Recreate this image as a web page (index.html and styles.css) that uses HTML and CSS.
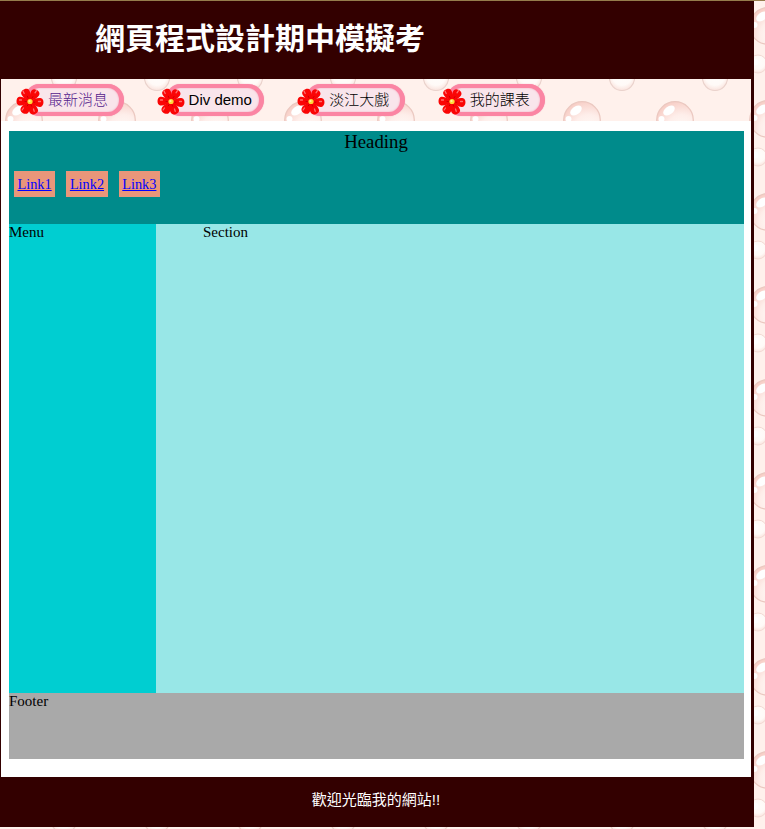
FILE: index.html
```html
<!DOCTYPE html>
<html lang="zh-Hant">
<head>
<meta charset="utf-8">
<title>網頁程式設計期中模擬考</title>
<link rel="stylesheet" href="styles.css">
</head>
<body>
<svg class="defs" width="0" height="0" aria-hidden="true">
  <defs>
    <path id="petal" d="M0 0C-2.5 -3-5 -7.5-4.3 -10.8C-3.6 -14.4 3.6 -14.4 4.3 -10.8C5 -7.5 2.5 -3 0 0Z"/>
    <symbol id="flower" viewBox="0 0 28 30">
      <g fill="#fa0505">
        <use href="#petal" transform="translate(14 15.5) rotate(-27)"/>
        <use href="#petal" transform="translate(14 15.5) rotate(32)"/>
        <use href="#petal" transform="translate(14 15.5) rotate(96)"/>
        <use href="#petal" transform="translate(14 15.5) rotate(158)"/>
        <use href="#petal" transform="translate(14 15.5) rotate(212)"/>
        <use href="#petal" transform="translate(14 15.5) rotate(272)"/>
      </g>
      <path d="M7 5l1.2 2.5M20.5 4.6l-1.5 2.2M3.5 14h2M22.5 15.5h2M17.5 23l.7 2.3M7.5 22l-1.4 2" fill="none" stroke="#ff7070" stroke-width="1.3" stroke-linecap="round"/>
      <path d="M12.3 12.3l-1.2-2.5M15.8 12.3l1.3-2M10.8 15.5h-2.2M17 16l2.2.3M15 18.5l.7 2M12.3 18.3l-1.2 1.8" stroke="#c40000" stroke-width=".9"/>
      <circle cx="14" cy="15.5" r="2.6" fill="#ffd83a"/>
      <circle cx="13.5" cy="15" r="1.1" fill="#fff6a0"/>
    </symbol>
  </defs>
</svg>
<div class="page">
  <header class="banner"><h1>網頁程式設計期中模擬考</h1></header>
  <nav class="nav">
    <a class="tab visited" href="#"><svg class="flower"><use href="#flower"/></svg><span>最新消息</span></a>
    <a class="tab" href="#"><svg class="flower"><use href="#flower"/></svg><span>Div demo</span></a>
    <a class="tab" href="#"><svg class="flower"><use href="#flower"/></svg><span>淡江大戲</span></a>
    <a class="tab" href="#"><svg class="flower"><use href="#flower"/></svg><span>我的課表</span></a>
  </nav>
  <main class="content">
    <div class="heading">
      <div class="heading-title">Heading</div>
      <div class="links"><a href="#">Link1</a><a href="#">Link2</a><a href="#">Link3</a></div>
    </div>
    <div class="columns">
      <div class="menu">Menu</div>
      <div class="section">Section</div>
    </div>
    <div class="demo-footer">Footer</div>
  </main>
  <footer class="footer">歡迎光臨我的網站!!</footer>
</div>
</body>
</html>
```
FILE: styles.css
```css
:root {
  --bubbles: url("data:image/svg+xml,%3Csvg xmlns='http://www.w3.org/2000/svg' width='93' height='93' viewBox='0 0 93 93'%3E%3Cdefs%3E%3CradialGradient id='b' cx='.68' cy='.75' r='.8'%3E%3Cstop offset='0' stop-color='%23fffaf7'/%3E%3Cstop offset='.5' stop-color='%23feeeea'/%3E%3Cstop offset='1' stop-color='%23f7cdc5'/%3E%3C/radialGradient%3E%3CradialGradient id='s' cx='.5' cy='.4' r='.6'%3E%3Cstop offset='0' stop-color='%23fffdfb'/%3E%3Cstop offset='.65' stop-color='%23fffaf7'/%3E%3Cstop offset='1' stop-color='%23fae3dd'/%3E%3C/radialGradient%3E%3C/defs%3E%3Crect width='93' height='93' fill='%23fff1ec'/%3E%3Ccircle cx='40' cy='40' r='18.3' fill='url(%23b)' stroke='%23ebc8c0' stroke-width='1.2'/%3E%3Cellipse cx='34' cy='30.5' rx='6.5' ry='4' transform='rotate(-35 34 30.5)' fill='%23fff'/%3E%3Ccircle cx='26.5' cy='39' r='3' fill='%23fff'/%3E%3Ccircle cx='80' cy='91' r='12.5' fill='url(%23s)' stroke='%23ead2cc' stroke-width='1.1'/%3E%3Ccircle cx='80' cy='-2' r='12.5' fill='url(%23s)' stroke='%23ead2cc' stroke-width='1.1'/%3E%3Ccircle cx='30' cy='78' r='9' fill='url(%23s)' stroke='%23f3dad4' stroke-width='1'/%3E%3Ccircle cx='27' cy='76' r='3.5' fill='%23fff'/%3E%3C/svg%3E");
}

* { box-sizing: border-box; }

body {
  margin: 0;
  min-height: 829px;
  border-top: 1px solid #957c4c;
  background: #fff1ec var(--bubbles) 77px 79px / 93px 93px;
  font: 15px/17px "Liberation Serif", "Noto Sans CJK TC", serif;
  color: #000;
  overflow: hidden;
}

.defs { display: block; }

.page {
  width: 754px;
  height: 826px;
  padding: 0 3px 0 1px;
  background: #300;
  display: flex;
  flex-direction: column;
}

.banner {
  height: 78px;
  padding-left: 94px;
  display: flex;
  align-items: center;
}

h1 {
  margin: 0 0 3px;
  color: #fff;
  font: bold 30px/44px "Liberation Sans", "Noto Sans CJK TC", sans-serif;
}

.nav {
  height: 42px;
  padding: 5px 0 0 16px;
  display: flex;
  gap: 33px;
  background: var(--bubbles) 76px 1px / 93px 93px;
}

.tab {
  width: 107.6px;
  height: 32px;
  padding-left: 31px;
  display: flex;
  align-items: center;
  position: relative;
  color: #000;
  text-decoration: none;
  font: 15px/22px "Liberation Sans", "Noto Sans CJK TC", sans-serif;
  font-weight: 300;
  white-space: nowrap;
}

.tab::before {
  content: "";
  position: absolute;
  inset: 0 1px 0 9px;
  border: 4px solid #fb85a3;
  border-right-width: 5px;
  border-radius: 13px 16px 16px 13px;
  background: #f9e5eb;
  box-shadow: inset 0 0 2px #f3a5bb, 0 0 1px #ef9ab2;
}

.tab span { position: relative; }

.tab.visited { color: #551a8b; }

.flower {
  position: absolute;
  left: -1px;
  top: 2px;
  width: 28px;
  height: 30px;
}

.content {
  height: 656px;
  padding: 10px 7px 18px 8px;
  background: #fff;
}

.heading {
  height: 93px;
  background: #008b8b;
}

.heading-title {
  height: 40px;
  padding-right: 1px;
  font-size: 18.75px;
  line-height: 22px;
  text-align: center;
}

.links {
  display: flex;
  gap: 11.2px;
  padding-left: 5px;
}

.links a {
  width: 41.2px;
  height: 26px;
  background: #e9967a;
  color: #00f;
  font-size: 14.3px;
  line-height: 26px;
  text-align: center;
}

.columns {
  height: 469px;
  display: grid;
  grid-template-columns: 147px 1fr;
}

.menu { background: #00ced1; }

.section {
  padding-left: 47px;
  background: #98e7e7;
}

.demo-footer {
  height: 66px;
  background: #a9a9a9;
}

.footer {
  height: 50px;
  color: #fff;
  font: 15px/45px "Liberation Sans", "Noto Sans CJK TC", sans-serif;
  text-align: center;
}
```
